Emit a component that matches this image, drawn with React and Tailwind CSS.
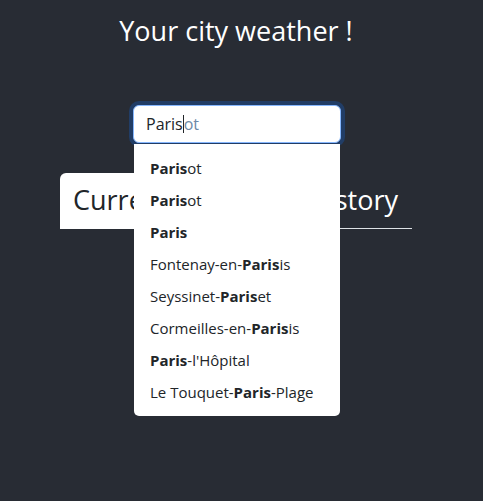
import React from "react";

const cities = [
  [["b", "Paris"], ["n", "ot"]],
  [["b", "Paris"], ["n", "ot"]],
  [["b", "Paris"]],
  [["n", "Fontenay-en-"], ["b", "Paris"], ["n", "is"]],
  [["n", "Seyssinet-"], ["b", "Paris"], ["n", "et"]],
  [["n", "Cormeilles-en-"], ["b", "Paris"], ["n", "is"]],
  [["b", "Paris"], ["n", "-l'Hôpital"]],
  [["n", "Le Touquet-"], ["b", "Paris"], ["n", "-Plage"]],
];

export default function App() {
  return (
    <div className="min-h-[501px] w-[483px] bg-[#282c34] font-['Open_Sans',sans-serif] text-white">
      <div className="w-[472px] flex flex-col items-center">
        <h1 className="pt-[14px] text-[27px] leading-[34px] font-normal">
          Your city weather !
        </h1>

        {/* search */}
        <div className="relative mt-[57px] w-[208px] translate-x-px">
          <div className="h-[38px] rounded-[6px] border border-[#86b7fe] bg-white px-3 flex items-center text-base shadow-[0_0_0_4px_rgba(13,110,253,0.25)]">
            <span className="text-[#212529]">Paris</span>
            <span className="w-px h-[18px] bg-[#212529]" />
            <span className="text-[#6c8aa8]">ot</span>
          </div>

          <ul className="absolute left-px top-[39px] z-10 w-[206px] rounded-b-[5px] bg-white py-2 text-[15px] text-[#212529]">
            {cities.map((c, i) => (
              <li key={i} className="h-8 px-4 flex items-center whitespace-nowrap">
                {c.map(([k, t], j) =>
                  k === "b" ? (
                    <b key={j} className="font-bold">{t}</b>
                  ) : (
                    <span key={j}>{t}</span>
                  )
                )}
              </li>
            ))}
          </ul>
        </div>

        {/* tabs */}
        <div className="mt-[30px] w-[352px] flex justify-between border-b border-[#dee2e6] text-[27px]">
          <div className="-mb-px rounded-t-[6px] bg-white px-[13px] pt-[10px] pb-[11px] leading-[34px] text-[#212529]">
            Current
          </div>
          <div className="px-[14px] pt-[10px] pb-[11px] leading-[34px] text-white">
            History
          </div>
        </div>
      </div>
    </div>
  );
}
